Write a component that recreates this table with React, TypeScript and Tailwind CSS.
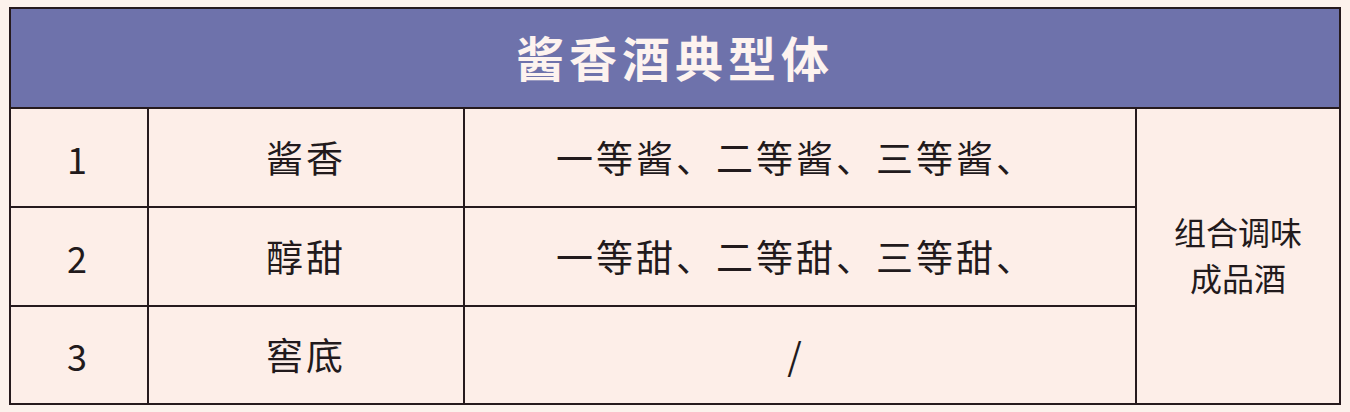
const ROWS = [
  { n: "1", name: "酱香", items: "一等酱、二等酱、三等酱、" },
  { n: "2", name: "醇甜", items: "一等甜、二等甜、三等甜、" },
  { n: "3", name: "窖底", items: "/" },
];

const cell = "border-2 border-[#261a1d] text-center align-middle";

export default function App() {
  return (
    <div
      className="w-[1350px] h-[412px] bg-[#fcf2ec] pt-[7px] pl-[9px] text-[#221a1c]"
      style={{ fontFamily: '"Noto Sans CJK SC", "Noto Sans", sans-serif' }}
    >
      <table className="table-fixed border-collapse w-[1330px]">
        <colgroup>
          <col className="w-[138px]" />
          <col className="w-[316px]" />
          <col className="w-[672px]" />
          <col className="w-[204px]" />
        </colgroup>
        <thead>
          <tr className="h-[100px]">
            <th
              colSpan={4}
              className={cell + " bg-[#6e72ab] text-[#fdf3ef] text-[48px] font-bold tracking-[5px] leading-none pb-[4px]"}
            >
              酱香酒典型体
            </th>
          </tr>
        </thead>
        <tbody className="bg-[#fdeee8]">
          {ROWS.map((r, i) => (
            <tr key={r.n} className={i === 2 ? "h-[98px]" : "h-[99px]"}>
              <td className={cell + " text-[36px] pr-[4px]"}>{r.n}</td>
              <td className={cell + " text-[37px] tracking-[3px]"}>{r.name}</td>
              <td className={cell + " text-[37px] tracking-[3px] pr-[8px]"}>{r.items}</td>
              {i === 0 && (
                <td rowSpan={3} className={cell + " text-[32px] leading-[46px] tracking-[0px] pb-[4px]"}>
                  组合调味
                  <br />
                  成品酒
                </td>
              )}
            </tr>
          ))}
        </tbody>
      </table>
    </div>
  );
}
